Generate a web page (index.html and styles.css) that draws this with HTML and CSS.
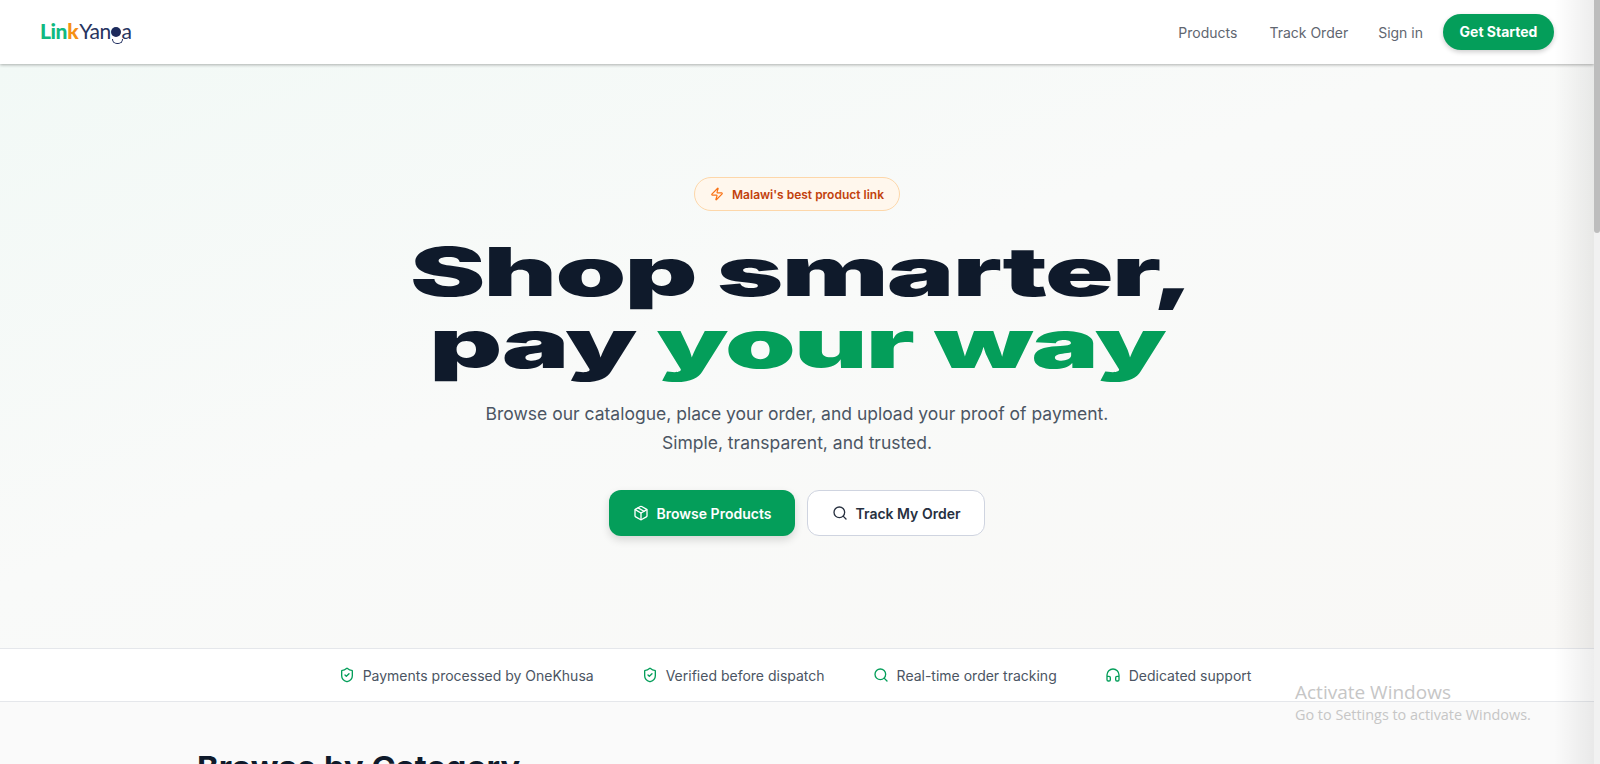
FILE: index.html
```html
<!DOCTYPE html>
<html lang="en">
<head>
    <meta charset="UTF-8" />
    <meta name="viewport" content="width=device-width, initial-scale=1" />
    <title>LinkYanga</title>
    <link rel="stylesheet" href="styles.css">
</head>
<body>
<div class="page">
    <header class="nav">
        <a class="logo" href="#"><span class="logo-lin">Lin</span><span class="logo-k">k</span><span class="logo-yanga">Yan<span class="logo-g">g</span>a</span></a>
        <nav class="nav-links">
            <a href="#">Products</a>
            <a href="#">Track Order</a>
            <a class="nav-signin" href="#">Sign in</a>
            <a class="nav-cta" href="#">Get Started</a>
        </nav>
    </header>

    <section class="hero">
        <div class="badge">
            <svg class="badge-icon" viewBox="0 0 24 24"><path d="M4 14a1 1 0 0 1-.78-1.63l9.9-10.2a.5.5 0 0 1 .86.46l-1.92 6.02A1 1 0 0 0 13 10h7a1 1 0 0 1 .78 1.63l-9.9 10.2a.5.5 0 0 1-.86-.46l1.92-6.02A1 1 0 0 0 11 14z"/></svg>
            <span>Malawi's best product link</span>
        </div>
        <h1 class="hero-title">
            <span class="hero-line hero-line-first">Shop smarter,</span>
            <span class="hero-line">pay <em>your way</em></span>
        </h1>
        <p class="hero-text">Browse our catalogue, place your order, and upload your proof of payment.<br>Simple, transparent, and trusted.</p>
        <div class="hero-actions">
            <a class="btn btn-primary" href="#">
                <svg class="btn-icon" viewBox="0 0 24 24"><path d="M11 21.73a2 2 0 0 0 2 0l7-4A2 2 0 0 0 21 16V8a2 2 0 0 0-1-1.73l-7-4a2 2 0 0 0-2 0l-7 4A2 2 0 0 0 3 8v8a2 2 0 0 0 1 1.73z"/><path d="M12 22V12"/><path d="M3.29 7 12 12l8.71-5"/><path d="m7.5 4.27 9 5.15"/></svg>
                Browse Products
            </a>
            <a class="btn btn-outline" href="#">
                <svg class="btn-icon" viewBox="0 0 24 24"><circle cx="11" cy="11" r="8"/><path d="m21 21-4.3-4.3"/></svg>
                Track My Order
            </a>
        </div>
    </section>

    <section class="trust">
        <div class="trust-item">
            <svg class="trust-icon" viewBox="0 0 24 24"><path d="M20 13c0 5-3.5 7.5-7.66 8.95a1 1 0 0 1-.67-.01C7.5 20.5 4 18 4 13V6a1 1 0 0 1 1-1c2 0 4.5-1.2 6.24-2.72a1.17 1.17 0 0 1 1.52 0C14.51 3.81 17 5 19 5a1 1 0 0 1 1 1z"/><path d="m9 12 2 2 4-4"/></svg>
            Payments processed by OneKhusa
        </div>
        <div class="trust-item">
            <svg class="trust-icon" viewBox="0 0 24 24"><path d="M20 13c0 5-3.5 7.5-7.66 8.95a1 1 0 0 1-.67-.01C7.5 20.5 4 18 4 13V6a1 1 0 0 1 1-1c2 0 4.5-1.2 6.24-2.72a1.17 1.17 0 0 1 1.52 0C14.51 3.81 17 5 19 5a1 1 0 0 1 1 1z"/><path d="m9 12 2 2 4-4"/></svg>
            Verified before dispatch
        </div>
        <div class="trust-item">
            <svg class="trust-icon" viewBox="0 0 24 24"><circle cx="11" cy="11" r="8"/><path d="m21 21-4.3-4.3"/></svg>
            Real-time order tracking
        </div>
        <div class="trust-item">
            <svg class="trust-icon" viewBox="0 0 24 24"><path d="M3 14h3a2 2 0 0 1 2 2v3a2 2 0 0 1-2 2H5a2 2 0 0 1-2-2v-7a9 9 0 0 1 18 0v7a2 2 0 0 1-2 2h-1a2 2 0 0 1-2-2v-3a2 2 0 0 1 2-2h3"/></svg>
            Dedicated support
        </div>
    </section>

    <section class="categories">
        <h2>Browse by Category</h2>
    </section>
</div>

<div class="edge-fade"></div>
<div class="activate">
    <div class="activate-title">Activate Windows</div>
    <div class="activate-sub">Go to Settings to activate Windows.</div>
</div>
<div class="scrollbar"><div class="scrollbar-thumb"></div></div>
</body>
</html>
```

FILE: styles.css
```css
* {
    box-sizing: border-box;
}
html, body {
    margin: 0;
    height: 100%;
    overflow: hidden;
}
body {
    font-family: 'Inter', 'Noto Sans', sans-serif;
    background-color: #fafafa;
    color: #0f1a2b;
}
a {
    text-decoration: none;
    color: inherit;
}
.page {
    width: 1594px;
    height: 764px;
    overflow: hidden;
}

/* top bar */
.nav {
    height: 64px;
    background: #fff;
    display: flex;
    align-items: center;
    justify-content: space-between;
    padding: 0 40px;
    box-shadow: 0 1px 3px rgba(0, 0, 0, 0.3);
    position: relative;
}
.logo {
    font-family: 'Lato', sans-serif;
    font-size: 21px;
    display: flex;
    letter-spacing: -0.4px;
    margin-top: -4px;
}
.logo-lin {
    color: #10b981;
    font-weight: 900;
}
.logo-k {
    color: #f59015;
    font-weight: 900;
    margin-right: 1px;
}
.logo-yanga {
    color: #27345f;
}
/* the g of the logo is a dot with a smile under it */
.logo-g {
    position: relative;
    color: transparent;
}
.logo-g::before {
    content: "";
    position: absolute;
    left: 0;
    top: 9px;
    width: 10px;
    height: 10px;
    border-radius: 50%;
    background: #1c2a5c;
}
.logo-g::after {
    content: "";
    position: absolute;
    left: 1px;
    top: 21px;
    width: 9px;
    height: 4px;
    border: 1.5px solid #1c2a5c;
    border-top: none;
    border-radius: 0 0 6px 6px;
}
.nav-links {
    display: flex;
    align-items: center;
    font-size: 14px;
    color: #5f6670;
}
.nav-links a {
    margin-left: 32px;
}
.nav-links .nav-signin {
    margin-left: 30px;
}
.nav-links .nav-cta {
    margin-left: 20px;
    width: 111px;
    height: 36px;
    line-height: 36px;
    text-align: center;
    border-radius: 18px;
    background: #049e5a;
    color: #fff;
    font-weight: 700;
    box-shadow: 0 2px 5px rgba(0, 0, 0, 0.2);
}

/* hero */
.hero {
    height: 584px;
    background: linear-gradient(160deg, #f2f9f6 0%, #f9faf9 45%, #f9f8f6 100%);
    display: flex;
    flex-direction: column;
    align-items: center;
    padding-top: 113px;
}
.badge {
    height: 34px;
    width: 206px;
    border: 1px solid #fdd7aa;
    border-radius: 17px;
    background: #fff7ed;
    color: #c2410c;
    font-size: 12px;
    font-weight: 600;
    display: flex;
    align-items: center;
    justify-content: center;
    gap: 8px;
}
.badge-icon {
    width: 14px;
    height: 14px;
    fill: none;
    stroke: #f97316;
    stroke-width: 2;
}
.hero-title {
    margin: 25px 0 0;
    font-family: 'Inter', sans-serif;
    font-size: 67px;
    font-weight: 900;
    line-height: 72px;
    letter-spacing: -1px;
    color: #0f1a2b;
    text-align: center;
}
.hero-line {
    display: block;
    white-space: nowrap;
    transform: scaleX(1.69);
}
.hero-line-first {
    padding-left: 5px;
}
.hero-title em {
    font-style: normal;
    color: #049e5a;
}
.hero-text {
    margin: 19px 0 0;
    font-size: 17.5px;
    line-height: 29px;
    text-align: center;
    color: #4b5563;
}
.hero-actions {
    display: flex;
    gap: 12px;
    margin-top: 33px;
}
.btn {
    height: 46px;
    border-radius: 12px;
    font-size: 14px;
    font-weight: 600;
    display: flex;
    align-items: center;
    justify-content: center;
    gap: 8px;
}
.btn-icon {
    width: 16px;
    height: 16px;
    fill: none;
    stroke: currentColor;
    stroke-width: 2;
    stroke-linecap: round;
    stroke-linejoin: round;
}
.btn-primary {
    width: 186px;
    background: #049e5a;
    color: #fff;
    box-shadow: 0 4px 8px rgba(0, 0, 0, 0.14);
}
.btn-outline {
    width: 178px;
    background: #fff;
    border: 1px solid #cfd4e0;
    color: #27303f;
}

/* trust strip */
.trust {
    height: 54px;
    background: #fff;
    border-top: 1px solid #e5e7eb;
    border-bottom: 1px solid #e5e7eb;
    display: flex;
    align-items: center;
    justify-content: center;
    gap: 48px;
    padding-right: 4px;
    font-size: 14px;
    color: #4b5563;
}
.trust-item {
    display: flex;
    align-items: center;
    gap: 8px;
}
.trust-icon {
    width: 16px;
    height: 16px;
    fill: none;
    stroke: #049e5a;
    stroke-width: 2;
    stroke-linecap: round;
    stroke-linejoin: round;
}

/* categories */
.categories {
    padding: 47px 0 0 197px;
}
.categories h2 {
    margin: 0;
    font-size: 30px;
    font-weight: 700;
    line-height: 36px;
    color: #0f1a2b;
    transform: scaleX(1.09);
    transform-origin: left;
}

/* overlays */
.edge-fade {
    position: absolute;
    right: 6px;
    top: 0;
    width: 40px;
    height: 764px;
    background: linear-gradient(to right, rgba(0, 0, 0, 0), rgba(0, 0, 0, 0.07));
    pointer-events: none;
}
.activate {
    position: absolute;
    left: 1295px;
    top: 680px;
    font-family: 'Open Sans', sans-serif;
    color: #c6c6c6;
    pointer-events: none;
}
.activate-title {
    font-size: 19px;
    line-height: 24px;
}
.activate-sub {
    font-size: 14.4px;
    line-height: 22px;
}
.scrollbar {
    position: absolute;
    right: 0;
    top: 0;
    width: 6px;
    height: 764px;
    background: #f1f1f1;
}
.scrollbar-thumb {
    height: 233px;
    background: #bdbdbd;
    border-radius: 0 0 3px 3px;
}
```
